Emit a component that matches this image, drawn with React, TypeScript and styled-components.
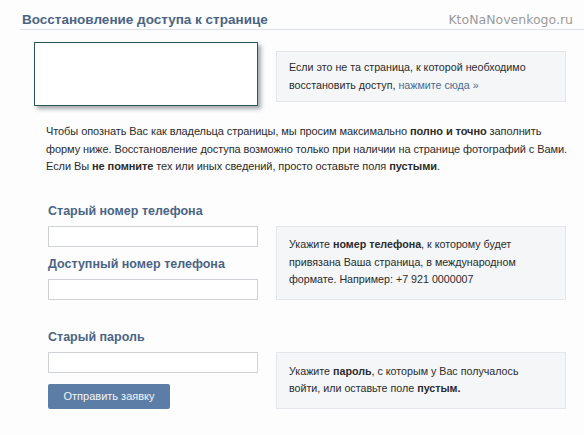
import React from 'react';
import styled, { createGlobalStyle } from 'styled-components';

const GlobalStyle = createGlobalStyle`
  html, body {
    margin: 0;
    padding: 0;
    background: #fdfdfd;
  }
  body {
    font-family: "Liberation Sans", Arial, sans-serif;
    font-size: 11px;
    color: #222;
  }
`;

const Page = styled.div`
  width: 584px;
  height: 435px;
  padding: 0 0 0 20px;
  box-sizing: border-box;
  overflow: hidden;
`;

const Header = styled.div`
  display: flex;
  align-items: baseline;
  justify-content: space-between;
  height: 30px;
  border-bottom: 1px solid #dde2e8;
  padding: 0 11px 0 2px;
  box-sizing: border-box;
`;

const Title = styled.h1`
  margin: 12px 0 0;
  font-size: 13.5px;
  font-weight: bold;
  color: #4b6484;
`;

const Watermark = styled.span`
  font-family: "DejaVu Sans", sans-serif;
  font-size: 12.5px;
  color: #9a9a9a;
`;

const Row = styled.div<{ $mt: number; $align: string }>`
  display: grid;
  grid-template-columns: 256px 290px;
  align-items: ${(p) => p.$align};
  margin-top: ${(p) => p.$mt}px;
`;

const LeftCol = styled.div<{ $pl: number }>`
  display: flex;
  flex-direction: column;
  align-items: flex-start;
  padding-left: ${(p) => p.$pl}px;
`;

const PhotoBox = styled.div`
  width: 224px;
  height: 64px;
  box-sizing: border-box;
  background: #fff;
  border: 1px solid #2e5558;
  box-shadow: 3px 3px 4px rgba(60, 70, 80, 0.45);
`;

const InfoBox = styled.div<{ $h: number; $mt?: number }>`
  height: ${(p) => p.$h}px;
  margin-top: ${(p) => p.$mt ?? 0}px;
  box-sizing: border-box;
  background: #f4f6f8;
  border: 1px solid #e3e7eb;
  padding: 0 12px;
  display: flex;
  flex-direction: column;
  justify-content: center;
  font-size: 10.7px;
  line-height: 17.5px;
  color: #2b2b2b;
  white-space: nowrap;
`;

const Link = styled.a`
  color: #4a6b94;
  text-decoration: none;
`;

const Intro = styled.p`
  margin: 17px 0 0 26px;
  width: 530px;
  font-size: 11px;
  line-height: 17.5px;
  letter-spacing: -0.08px;
  color: #2b2b2b;
  white-space: nowrap;
`;

const Label = styled.div<{ $mt: number }>`
  margin-top: ${(p) => p.$mt}px;
  font-size: 12.5px;
  font-weight: bold;
  color: #4b6484;
  line-height: 16px;
`;

const Input = styled.input<{ $mt: number }>`
  margin-top: ${(p) => p.$mt}px;
  width: 210px;
  height: 21px;
  box-sizing: border-box;
  border: 1px solid #cfd3d8;
  background: #fff;
  padding: 2px 4px;
  font: inherit;
  outline: none;
`;

const Button = styled.button`
  margin-top: 11px;
  width: 122px;
  height: 25px;
  border: none;
  border-radius: 2px;
  background: #5c7ea6;
  color: #f2f5f8;
  font-family: inherit;
  font-size: 11px;
  cursor: pointer;
  padding: 0;
`;

export default function App() {
  return (
    <>
      <GlobalStyle />
      <Page>
        <Header>
          <Title>Восстановление доступа к странице</Title>
          <Watermark>KtoNaNovenkogo.ru</Watermark>
        </Header>

        <Row $mt={12} $align="start">
          <LeftCol $pl={14}>
            <PhotoBox />
          </LeftCol>
          <InfoBox $h={51} $mt={9}>
            <span>Если это не та страница, к которой необходимо</span>
            <span>
              восстановить доступ, <Link href="#">нажмите сюда »</Link>
            </span>
          </InfoBox>
        </Row>

        <Intro>
          Чтобы опознать Вас как владельца страницы, мы просим максимально <b>полно и точно</b> заполнить
          <br />
          форму ниже. Восстановление доступа возможно только при наличии на странице фотографий с Вами.
          <br />
          Если Вы <b>не помните</b> тех или иных сведений, просто оставьте поля <b>пустыми</b>.
        </Intro>

        <Row $mt={27} $align="end">
          <LeftCol $pl={28}>
            <Label $mt={0}>Старый номер телефона</Label>
            <Input $mt={7} />
            <Label $mt={9}>Доступный номер телефона</Label>
            <Input $mt={7} />
          </LeftCol>
          <InfoBox $h={74}>
            <span>
              Укажите <b>номер телефона</b>, к которому будет
            </span>
            <span>привязана Ваша страница, в международном</span>
            <span>формате. Например: +7 921 0000007</span>
          </InfoBox>
        </Row>

        <Row $mt={29} $align="end">
          <LeftCol $pl={28}>
            <Label $mt={0}>Старый пароль</Label>
            <Input $mt={7} />
            <Button>Отправить заявку</Button>
          </LeftCol>
          <InfoBox $h={57}>
            <span>
              Укажите <b>пароль</b>, с которым у Вас получалось
            </span>
            <span>
              войти, или оставьте поле <b>пустым.</b>
            </span>
          </InfoBox>
        </Row>
      </Page>
    </>
  );
}
